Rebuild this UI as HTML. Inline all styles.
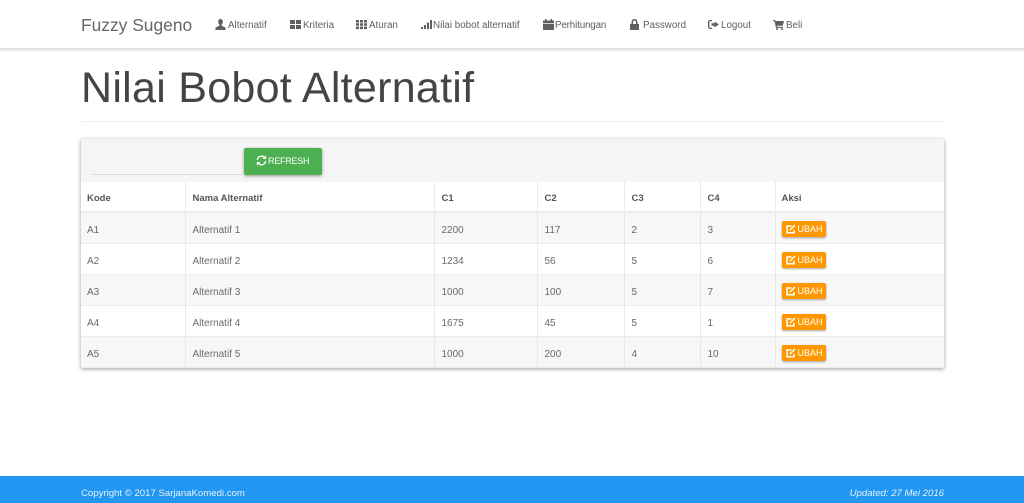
<!DOCTYPE html>
<html><head><meta charset="utf-8"><style>
html,body{margin:0;padding:0}
body{width:1024px;height:503px;overflow:hidden;position:relative;background:#fff;font-family:"Liberation Sans",sans-serif;color:#555}
.nav{position:absolute;left:0;top:0;width:1024px;height:48px;background:#fff;border-bottom:2px solid #e2e2e2;box-shadow:0 1px 2px rgba(0,0,0,.08)}
.t{position:absolute;white-space:nowrap}
.n{font-size:9.8px;line-height:14px;top:18px;padding-top:1px;color:#5f5f5f}
.i{position:absolute;top:18px;width:13px;height:13px;fill:#5f5f5f}
h1{position:absolute;left:81px;top:63px;margin:0;font-weight:400;font-size:43px;letter-spacing:.28px;line-height:50px;color:#444;white-space:nowrap}
.hr{position:absolute;left:81px;top:121px;width:863px;height:1px;background:#eee}
.panel{position:absolute;left:81px;top:139px;width:863px;height:229px;background:#fff;box-shadow:0 1px 4px rgba(0,0,0,.4)}
.tool{position:absolute;left:0;top:0;width:863px;height:43px;background:#f5f5f5}
.line{position:absolute;left:11px;top:35px;width:150px;height:1px;background:#ddd}
.ref{position:absolute;left:163px;top:9px;width:78px;height:27px;background:#4caf50;border-radius:2px;box-shadow:0 1px 3px rgba(0,0,0,.4);color:#fff;font-size:9px;line-height:26px;letter-spacing:-.25px}
table{position:absolute;left:0;top:43px;width:863px;border-collapse:collapse;table-layout:fixed;font-size:10px;color:#6a6a6a}
td,th{height:26px;padding:4px 0 0 7px;border-right:1px solid #e8e8e8;border-bottom:1px solid #ececec;text-align:left;box-sizing:content-box;white-space:nowrap}
td:first-child,th:first-child{padding-left:6px}
th{font-weight:700;font-size:9.500px;color:#555;border-bottom:2px solid #eeeeee;height:25px}
td:last-child,th:last-child{border-right:0;padding-left:6px}
tr.o td{background:#f7f7f7}
.b{display:inline-block;position:relative;top:-1px;width:44px;height:16px;background:#ff9800;border-radius:2px;box-shadow:0 1px 2px rgba(0,0,0,.35);color:#fff;font-size:9px;line-height:16px;vertical-align:middle}
.b svg{position:absolute;left:4px;top:3px;width:10px;height:10px}
.b span{position:absolute;left:16px;top:0}
.foot{position:absolute;left:0;top:476px;width:1024px;height:27px;background:#2196f3;color:#e3f2fd;font-size:9.600px}
</style></head><body>
<div class="nav">
<span class="t" style="left:81px;top:14px;font-size:17.400px;line-height:22px;color:#666">Fuzzy Sugeno</span>

<svg class="i" style="left:214px" viewBox="0 0 13 13"><path d="M6.5 1C5 1 4.2 2.2 4.2 3.8c0 1.2.5 2.2 1.2 2.8v1.2L1.500 9.500V12h10V9.500L7.600 7.800V6.600c.7-.6 1.200-1.600 1.200-2.800C8.800 2.200 8 1 6.500 1z"/></svg>
<span class="t n" style="left:228px">Alternatif</span>

<svg class="i" style="left:289px" viewBox="0 0 13 13"><path d="M1 2h5v4H1zM7 2h5v4H7zM1 7h5v4H1zM7 7h5v4H7z"/></svg>
<span class="t n" style="left:303px">Kriteria</span>

<svg class="i" style="left:355px" viewBox="0 0 13 13"><path d="M1 2h3v2.500H1zM5 2h3v2.500H5zM9 2h3v2.500H9zM1 5.300h3v2.500H1zM5 5.300h3v2.500H5zM9 5.300h3v2.500H9zM1 8.600h3v2.500H1zM5 8.600h3v2.500H5zM9 8.600h3v2.500H9z"/></svg>
<span class="t n" style="left:369px">Aturan</span>

<svg class="i" style="left:420px" viewBox="0 0 13 13"><path d="M1 9h2v2H1zM4 7h2v4H4zM7 4.500h2V11H7zM10 2h2v9h-2z"/></svg>
<span class="t n" style="left:433px">Nilai bobot alternatif</span>

<svg class="i" style="left:542px" viewBox="0 0 13 13"><path d="M1 2.500h2V1h1.500v1.500h4V1H10v1.500h2V5H1zM1 5.800h11V12H1z"/></svg>
<span class="t n" style="left:555px;letter-spacing:-.15px">Perhitungan</span>

<svg class="i" style="left:628px" viewBox="0 0 13 13"><path d="M2 6h1.500V4.200C3.500 2.400 4.800 1 6.500 1s3 1.400 3 3.200V6H11v6H2zM5 6h3V4.200C8 3.300 7.400 2.500 6.500 2.500S5 3.300 5 4.200z"/></svg>
<span class="t n" style="left:643px">Password</span>

<svg class="i" style="left:707px" viewBox="0 0 13 13"><path d="M5 2H3C2 2 1 3 1 4v5c0 1 1 2 2 2h2V9.700H3.200c-.5 0-.8-.3-.8-.8V4.100c0-.5.3-.8.8-.8H5zM7.500 3.500 11.800 6.500 7.500 9.500V7.700H4.500V5.300h3z"/></svg>
<span class="t n" style="left:721px">Logout</span>

<svg class="i" style="left:772px" viewBox="0 0 13 13"><path d="M1 2h2.200l.3 1H12l-1.200 4.800H4.800l.2 1h6v1.100H4L2.500 3.100H1z"/><circle cx="5" cy="11" r="1"/><circle cx="10" cy="11" r="1"/></svg>
<span class="t n" style="left:786px">Beli</span>
</div>

<h1>Nilai Bobot Alternatif</h1>
<div class="hr"></div>

<div class="panel">
<div class="tool">
<div class="line"></div>
<div class="ref">
<svg style="position:absolute;left:12px;top:7px" width="11" height="11" viewBox="0 0 12 12" fill="none" stroke="#fff" stroke-width="1.500"><path d="M1.500 5.500A4.500 4.500 0 0 1 9.500 3M10.500 6.500A4.500 4.500 0 0 1 2.500 9"/><path d="M10.500 0.800v3H7.500M1.500 11.200v-3h3" stroke-width="1.200"/></svg>
<span style="position:absolute;left:24px;top:0">REFRESH</span>
</div>
</div>
<table>
<colgroup><col style="width:104px"><col style="width:249px"><col style="width:103px"><col style="width:87px"><col style="width:76px"><col style="width:75px"><col style="width:169px"></colgroup>
<tr><th>Kode</th><th>Nama Alternatif</th><th>C1</th><th>C2</th><th>C3</th><th>C4</th><th>Aksi</th></tr>
<tr class="o"><td>A1</td><td>Alternatif 1</td><td>2200</td><td>117</td><td>2</td><td>3</td><td><span class="b"><svg viewBox="0 0 10 10" fill="none" stroke="#fff" stroke-width="1.500"><path d="M8 6v2.800H1V2h4.500"/><path d="M3.800 6.200 9 1"/></svg><span>UBAH</span></span></td></tr>
<tr><td>A2</td><td>Alternatif 2</td><td>1234</td><td>56</td><td>5</td><td>6</td><td><span class="b"><svg viewBox="0 0 10 10" fill="none" stroke="#fff" stroke-width="1.500"><path d="M8 6v2.800H1V2h4.500"/><path d="M3.800 6.200 9 1"/></svg><span>UBAH</span></span></td></tr>
<tr class="o"><td>A3</td><td>Alternatif 3</td><td>1000</td><td>100</td><td>5</td><td>7</td><td><span class="b"><svg viewBox="0 0 10 10" fill="none" stroke="#fff" stroke-width="1.500"><path d="M8 6v2.800H1V2h4.500"/><path d="M3.800 6.200 9 1"/></svg><span>UBAH</span></span></td></tr>
<tr><td>A4</td><td>Alternatif 4</td><td>1675</td><td>45</td><td>5</td><td>1</td><td><span class="b"><svg viewBox="0 0 10 10" fill="none" stroke="#fff" stroke-width="1.500"><path d="M8 6v2.800H1V2h4.500"/><path d="M3.800 6.200 9 1"/></svg><span>UBAH</span></span></td></tr>
<tr class="o"><td>A5</td><td>Alternatif 5</td><td>1000</td><td>200</td><td>4</td><td>10</td><td><span class="b"><svg viewBox="0 0 10 10" fill="none" stroke="#fff" stroke-width="1.500"><path d="M8 6v2.800H1V2h4.500"/><path d="M3.800 6.200 9 1"/></svg><span>UBAH</span></span></td></tr>
</table>
</div>

<div class="foot">
<span class="t" style="left:81px;top:11px;line-height:14px">Copyright © 2017 SarjanaKomedi.com</span>
<span class="t" style="right:80px;top:11px;line-height:14px;font-style:italic">Updated: 27 Mei 2016</span>
</div>
</body></html>
